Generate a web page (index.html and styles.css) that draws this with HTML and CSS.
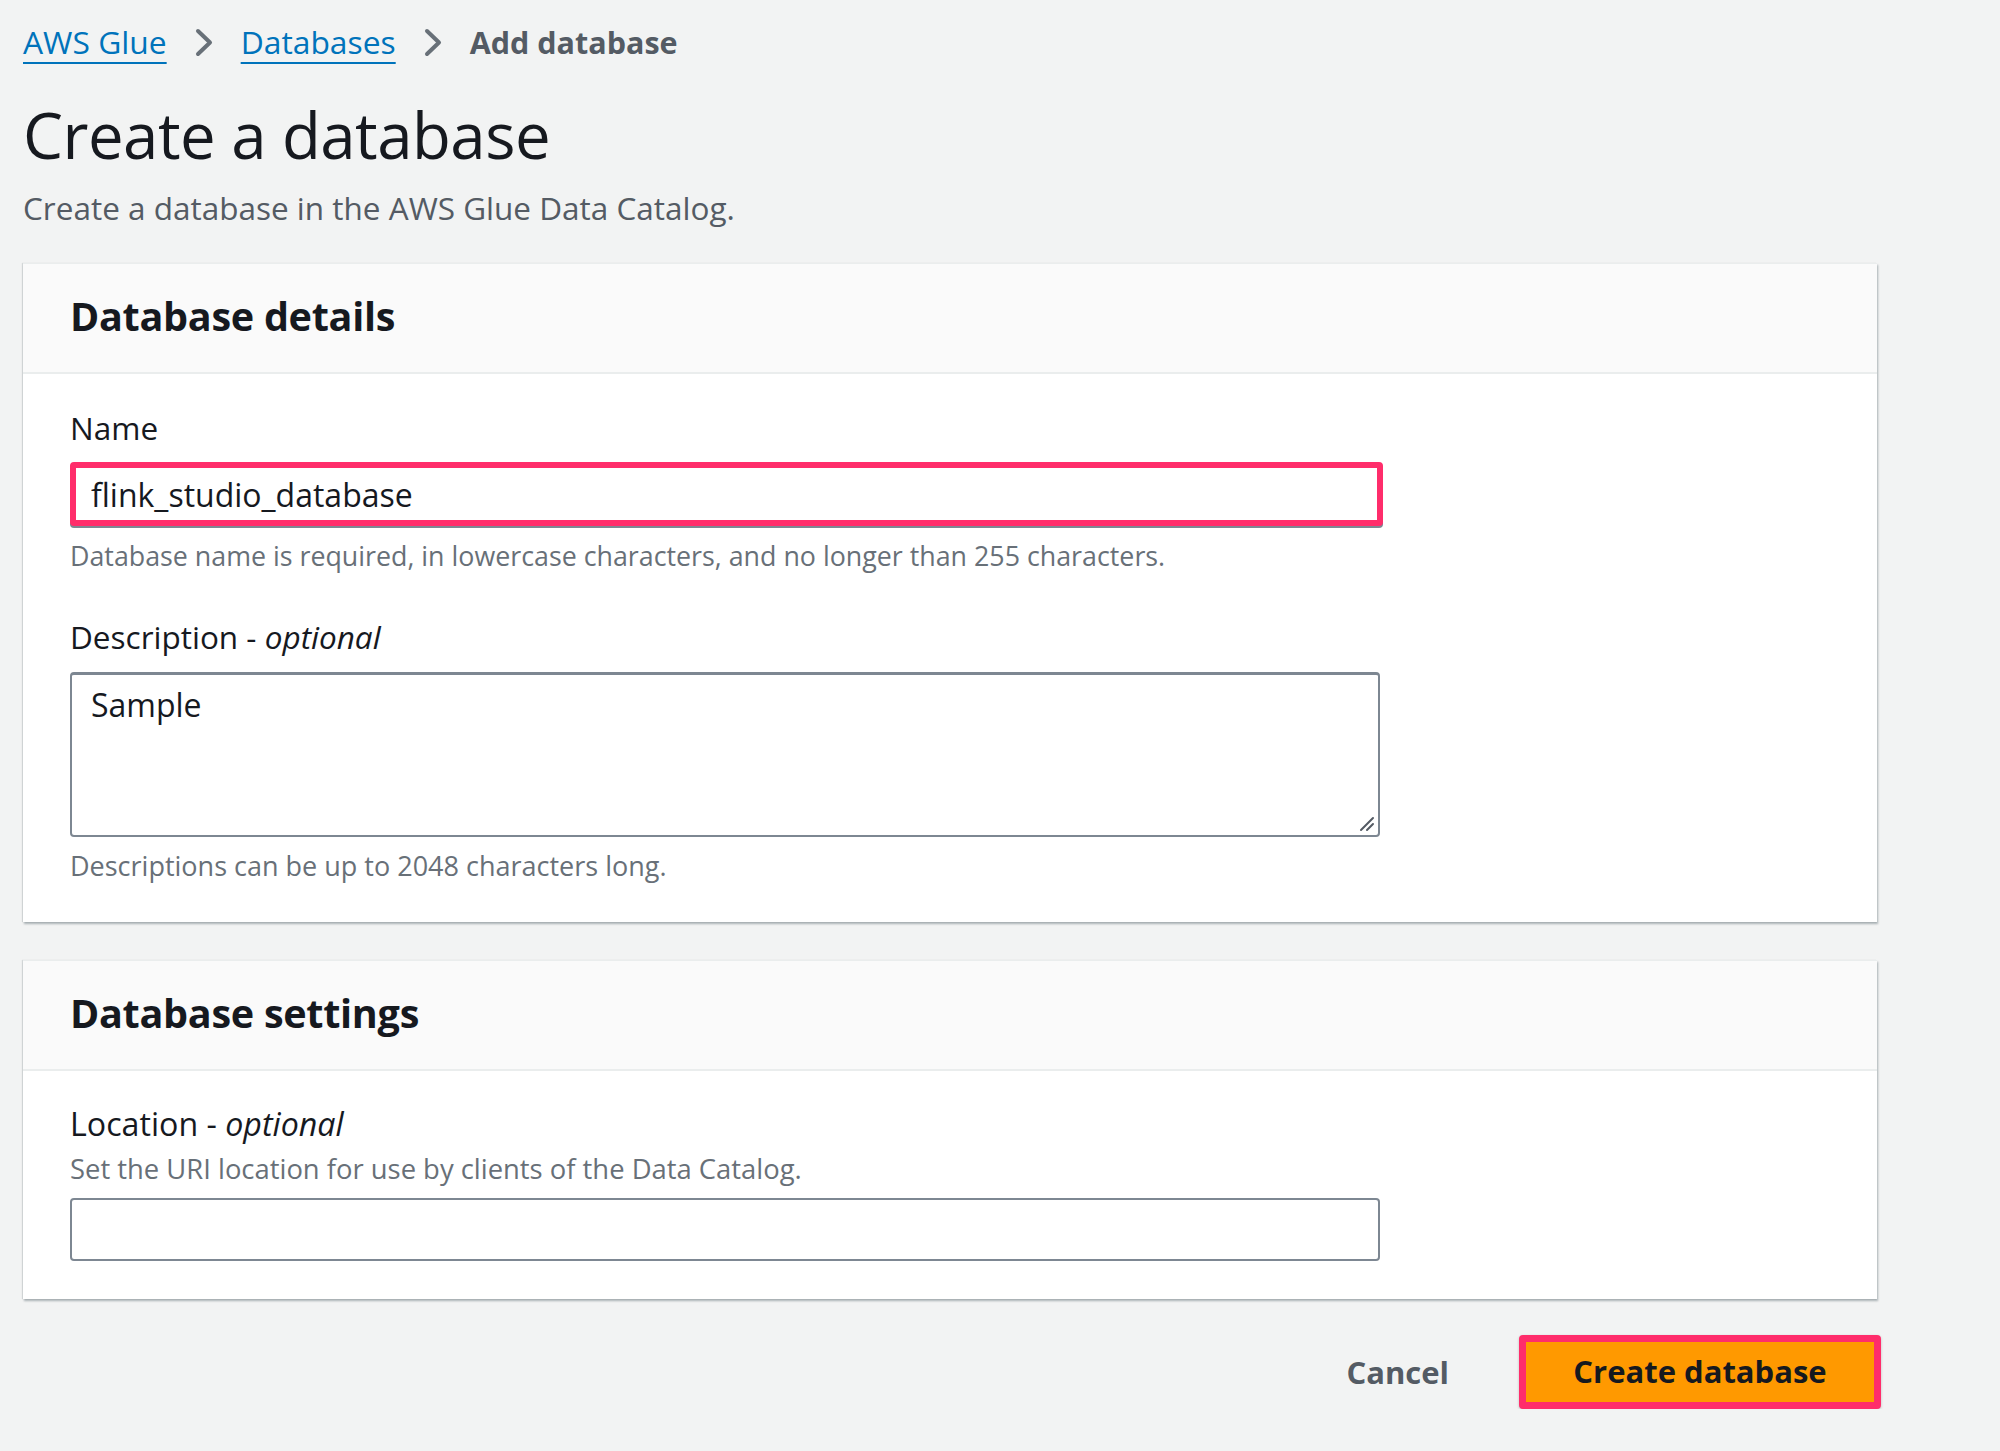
FILE: index.html
```html
<!DOCTYPE html>
<html lang="en">
<head>
<meta charset="utf-8">
<title>Create a database</title>
<link rel="stylesheet" href="styles.css">
</head>
<body>
<div class="page">
  <nav class="crumbs">
    <a class="crumb-link" href="#">AWS Glue</a>
    <svg class="chev" width="18" height="29" viewBox="0 0 18 29"><polyline points="3,3 15,14.5 3,26" fill="none" stroke="#687078" stroke-width="4" stroke-linecap="round" stroke-linejoin="round"/></svg>
    <a class="crumb-link" href="#">Databases</a>
    <svg class="chev" width="18" height="29" viewBox="0 0 18 29"><polyline points="3,3 15,14.5 3,26" fill="none" stroke="#687078" stroke-width="4" stroke-linecap="round" stroke-linejoin="round"/></svg>
    <span class="crumb-current">Add database</span>
  </nav>

  <h1 class="title">Create a database</h1>
  <p class="subtitle">Create a database in the AWS Glue Data Catalog.</p>

  <section class="panel">
    <header class="panel-head"><h2 class="panel-title">Database details</h2></header>
    <div class="panel-body panel-body-first">
      <label class="label">Name</label>
      <input class="input input-highlight" type="text" value="flink_studio_database">
      <p class="hint hint-name">Database name is required, in lowercase characters, and no longer than 255 characters.</p>

      <label class="label label-desc">Description - <i>optional</i></label>
      <div class="textarea-wrap">
        <textarea class="textarea">Sample</textarea>
        <svg class="grip" width="16" height="16" viewBox="0 0 16 16"><path d="M14 2 L2 14 M14 8 L8 14" stroke="#545b64" stroke-width="2" stroke-linecap="round" fill="none"/></svg>
      </div>
      <p class="hint hint-desc">Descriptions can be up to 2048 characters long.</p>
    </div>
  </section>

  <section class="panel panel-second">
    <header class="panel-head"><h2 class="panel-title">Database settings</h2></header>
    <div class="panel-body panel-body-second">
      <label class="label label-loc">Location - <i>optional</i></label>
      <p class="hint hint-loc">Set the URI location for use by clients of the Data Catalog.</p>
      <input class="input input-loc" type="text" value="">
    </div>
  </section>

  <div class="actions">
    <button class="btn-cancel" type="button">Cancel</button>
    <button class="btn-primary" type="button">Create database</button>
  </div>
</div>
</body>
</html>
```

FILE: styles.css
```css
* { box-sizing: border-box; }

html, body {
  margin: 0;
  padding: 0;
  background: #f2f3f3;
  font-family: "Open Sans", "Noto Sans", "Liberation Sans", sans-serif;
  color: #16191f;
}

.page {
  padding: 17px 0 0 23px;
  width: 1904px;
}

.crumbs {
  display: flex;
  align-items: center;
  height: 50px;
  font-size: 31.8px;
  line-height: 50px;
}

.crumb-link {
  color: #0073bb;
  text-decoration: underline;
  text-decoration-thickness: 2px;
  text-underline-offset: 8px;
}

.chev {
  margin: 0 28px;
  display: block;
}

.crumb-current {
  color: #545b64;
  font-weight: 700;
  font-size: 30.5px;
}

.title {
  margin: 32px 0 0;
  font-size: 63.5px;
  line-height: 72px;
  font-weight: 400;
  letter-spacing: -0.5px;
  color: #16191f;
}

.subtitle {
  margin: 17px 0 0;
  font-size: 31.5px;
  line-height: 40px;
  color: #545b64;
}

.panel {
  margin-top: 35px;
  width: 1854px;
  background: #ffffff;
  border-top: 1px solid #eaeded;
  box-shadow: 1px 2px 2px rgba(0, 28, 36, 0.3), -1px 0 1px rgba(0, 28, 36, 0.12);
}

.panel-second {
  margin-top: 38px;
}

.panel-head {
  height: 110px;
  background: #fafafa;
  border-bottom: 2px solid #eaeded;
  display: flex;
  align-items: center;
  padding: 0 47px 5px;
}

.panel-title {
  margin: 0;
  font-size: 39.6px;
  line-height: 48px;
  font-weight: 700;
  letter-spacing: -0.3px;
  color: #16191f;
}

.panel-body {
  padding: 0 47px;
  display: flex;
  flex-direction: column;
  align-items: flex-start;
}

.panel-body-first {
  padding-top: 34px;
  padding-bottom: 38px;
}

.panel-body-second {
  padding-top: 33px;
  padding-bottom: 38px;
}

.label {
  display: block;
  font-size: 31.5px;
  line-height: 40px;
  color: #16191f;
}

.label-loc {
  font-size: 32.2px;
}

.label i {
  font-style: italic;
}

.label-desc {
  margin-top: 43px;
}

.hint {
  margin: 0;
  font-size: 27px;
  line-height: 36px;
  color: #687078;
}

.hint-name { margin-top: 12px; font-size: 26.8px; }
.hint-desc { margin-top: 11px; }
.hint-loc { margin-top: 7px; font-size: 27.4px; }

.input {
  display: block;
  width: 1310px;
  height: 63px;
  margin: 14px 0 0;
  padding: 0 19px;
  border: 2px solid #7d8792;
  border-radius: 4px;
  background: #ffffff;
  font-family: inherit;
  font-size: 32px;
  color: #16191f;
  outline: none;
}

.input-highlight {
  width: 1313px;
  height: 64px;
  padding: 0 15px;
  border: 6px solid #ff2d6b;
  border-radius: 4px;
  box-shadow: 0 2px 0 #7d8792;
}

.input-loc {
  margin-top: 11px;
}

.textarea-wrap {
  position: relative;
  margin-top: 15px;
  width: 1310px;
  height: 165px;
}

.textarea {
  display: block;
  width: 100%;
  height: 100%;
  margin: 0;
  padding: 12px 19px;
  border: 2px solid #7d8792;
  border-top-width: 3px;
  border-radius: 4px;
  background: #ffffff;
  font-family: inherit;
  font-size: 32px;
  line-height: 36px;
  color: #16191f;
  resize: none;
  outline: none;
}

.grip {
  position: absolute;
  right: 5px;
  bottom: 5px;
}

.actions {
  margin-top: 36px;
  width: 1858px;
  display: flex;
  justify-content: flex-end;
  align-items: center;
}

.btn-cancel {
  background: none;
  border: none;
  padding: 0;
  margin-right: 70px;
  font-family: inherit;
  font-size: 31px;
  font-weight: 700;
  color: #545b64;
  cursor: pointer;
}

.btn-primary {
  width: 362px;
  height: 74px;
  background: #ff9900;
  border: 7px solid #ff2d6b;
  border-radius: 4px;
  box-shadow: 0 1px 3px rgba(0, 0, 0, 0.2);
  font-family: inherit;
  font-size: 31px;
  font-weight: 700;
  color: #16191f;
  padding: 0 0 3px;
  cursor: pointer;
}
```
